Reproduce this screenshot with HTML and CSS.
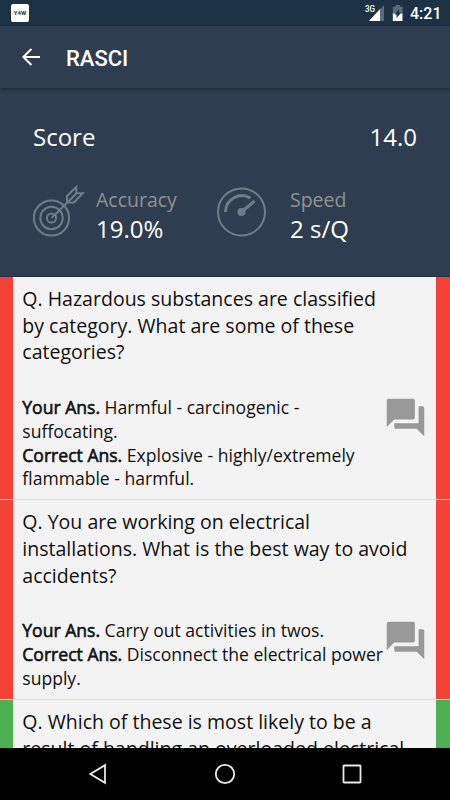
FILE: index.html
```html
<!DOCTYPE html>
<html lang="en">
<head>
<meta charset="utf-8">
<title>RASCI</title>
<link rel="stylesheet" href="styles.css">
</head>
<body>
<div class="screen">
  <div class="status">
    <span class="app-badge">Y4W</span>
    <svg class="signal" width="22" height="20" viewBox="0 0 22 20"><path d="M20 1v16H5z" fill="#5a6b7a"/><path d="M16 5v12H5z" fill="#fff"/><text class="net" x="1" y="8" textLength="10" lengthAdjust="spacingAndGlyphs">3G</text></svg>
    <svg class="battery" width="12" height="17" viewBox="0 0 12 17"><path d="M3.500 0h4.500v1.700h2.500v6.800H.8V1.700h2.700z" fill="#5a6b7a"/><path d="M.8 8.500h9.700V16H.8z" fill="#fff"/><path d="M7 4v3.700h2L4.500 13V9.600H2.800z" fill="#1c3144"/></svg>
    <span class="clock">4:21</span>
  </div>
  <header class="toolbar">
    <svg width="18" height="18" viewBox="0 0 18 18" fill="none" stroke="#fff" stroke-width="2"><path d="M18 9H1.500M9.400 1L1.400 9l8 8"/></svg>
    <h1>RASCI</h1>
  </header>
  <section class="summary">
    <div class="score"><span>Score</span><span>14.0</span></div>
    <div class="stats">
      <div class="stat accuracy">
        <svg width="53" height="53" viewBox="0 0 53 53" fill="none" stroke="#6f7c8a" stroke-width="2"><circle cx="18.500" cy="33" r="17.600"/><circle cx="18.500" cy="33" r="11.200"/><circle cx="18.500" cy="33" r="4.600"/><path d="M18.500 33L43 9M34 17.500V11L43.300 2V8.300H49.800L41 17.500z"/></svg>
        <div><div class="label">Accuracy</div><div class="value">19.0%</div></div>
      </div>
      <div class="stat">
        <svg width="50" height="50" viewBox="0 0 50 50" fill="none" stroke="#6f7c8a"><circle cx="24.500" cy="25" r="23.500" stroke-width="2"/><path d="M8.500 25A16.500 16.500 0 0 1 33.500 11" stroke-width="3"/><path d="M24.500 25L37.500 14" stroke-width="3"/><circle cx="24.500" cy="25" r="4" fill="#6f7c8a" stroke="none"/></svg>
        <div><div class="label">Speed</div><div class="value">2 s/Q</div></div>
      </div>
    </div>
  </section>
  <main class="list">
    <article class="item wrong">
      <p class="question">Q. Hazardous substances are classified<br>by category. What are some of these<br>categories?</p>
      <div class="answers">
        <p><b>Your Ans.</b> Harmful - carcinogenic -<br>suffocating.<br><b>Correct Ans.</b> Explosive - highly/extremely<br>flammable - harmful.</p>
        <svg class="chat" width="45" height="45" viewBox="0 0 24 24" fill="#999"><path d="M21 6h-2v9H6v2c0 .55.450 1 1 1h11l4 4V7c0-.55-.45-1-1-1zm-4 6V3c0-.55-.45-1-1-1H3c-.55 0-1 .45-1 1v14l4-4h10c.55 0 1-.45 1-1z"/></svg>
      </div>
    </article>
    <article class="item wrong">
      <p class="question">Q. You are working on electrical<br>installations. What is the best way to avoid<br>accidents?</p>
      <div class="answers">
        <p><b>Your Ans.</b> Carry out activities in twos.<br><b>Correct Ans.</b> Disconnect the electrical power<br>supply.</p>
        <svg class="chat" width="45" height="45" viewBox="0 0 24 24" fill="#999"><path d="M21 6h-2v9H6v2c0 .55.450 1 1 1h11l4 4V7c0-.55-.45-1-1-1zm-4 6V3c0-.55-.45-1-1-1H3c-.55 0-1 .45-1 1v14l4-4h10c.55 0 1-.45 1-1z"/></svg>
      </div>
    </article>
    <article class="item right">
      <p class="question">Q. Which of these is most likely to be a<br>result of handling an overloaded electrical</p>
    </article>
  </main>
  <nav class="navbar">
    <svg width="20" height="22" viewBox="0 0 20 22"><path d="M17 2.200v17.600L2.300 11z"/></svg>
    <svg width="22" height="22" viewBox="0 0 22 22"><circle cx="11" cy="11" r="9.200"/></svg>
    <svg width="20" height="20" viewBox="0 0 20 20"><rect x="1.500" y="1.500" width="17" height="17" rx=".5"/></svg>
  </nav>
</div>
</body>
</html>
```

FILE: styles.css
```css
* { box-sizing: border-box; }
body { margin: 0; font-family: "Open Sans", sans-serif; }
h1, p { margin: 0; }
svg { display: block; flex: none; }
.screen { width: 450px; height: 800px; display: flex; flex-direction: column; overflow: hidden; background: #2e3e50; }
.status { flex: none; height: 26px; background: #1c3144; display: flex; align-items: flex-start; color: #fff; }
.app-badge { width: 18px; height: 18px; margin: 4px 0 0 11px; border-radius: 2px; background: #fff; color: #1c3144; font: 700 6px/18px Roboto, sans-serif; text-align: center; }
.signal { margin: 4px 0 0 335px; }
.net { font: 500 8.500px Roboto, sans-serif; fill: #fff; }
.battery { margin: 5px 0 0 6px; }
.clock { margin-left: 6px; font: 500 16px/28px Roboto, sans-serif; }
.toolbar { flex: none; height: 62px; padding-left: 22px; display: flex; align-items: center; gap: 26px; color: #fff; position: relative; box-shadow: 0 2px 4px rgba(0, 0, 0, .3); }
.toolbar h1 { padding-top: 3px; font: 500 22px/28px Roboto, sans-serif; }
.summary { flex: none; height: 188.500px; padding: 32px 33px 0; color: #fff; border-bottom: 1px solid #1c3144; }
.score { display: flex; justify-content: space-between; font-size: 24px; line-height: 34px; }
.stats { display: flex; margin-top: 31px; }
.stat { display: flex; gap: 23px; align-items: center; }
.stat svg { margin-bottom: 7px; }
.accuracy { width: 184px; gap: 10px; }
.label { font-size: 19.500px; line-height: 27px; color: #8f9193; }
.value { font-size: 24px; line-height: 32px; }
.list { flex: 1; min-height: 0; overflow: hidden; background: #f3f3f3; color: #111; }
.item { padding: 9.300px 0 8.900px 9.300px; border: solid #f44336; border-width: 0 14px 0 13px; position: relative; }
.item::after { content: ""; position: absolute; left: -13px; right: -14px; bottom: -.5px; height: 1px; background: #d8dee2; z-index: 1; }
.right { border-color: #4caf50; }
.question { font-size: 19.550px; line-height: 26.700px; white-space: nowrap; }
.answers { margin-top: 30px; display: flex; position: relative; font-size: 17.570px; line-height: 23.800px; white-space: nowrap; }
.answers b { font-weight: 400; -webkit-text-stroke: .6px #111; }
.chat { position: absolute; right: 8.500px; top: -1px; }
.navbar { flex: none; height: 52px; background: #000; display: flex; align-items: center; justify-content: center; gap: 106px; }
.navbar svg { fill: none; stroke: #e8e8e8; stroke-width: 1.800; }
```
